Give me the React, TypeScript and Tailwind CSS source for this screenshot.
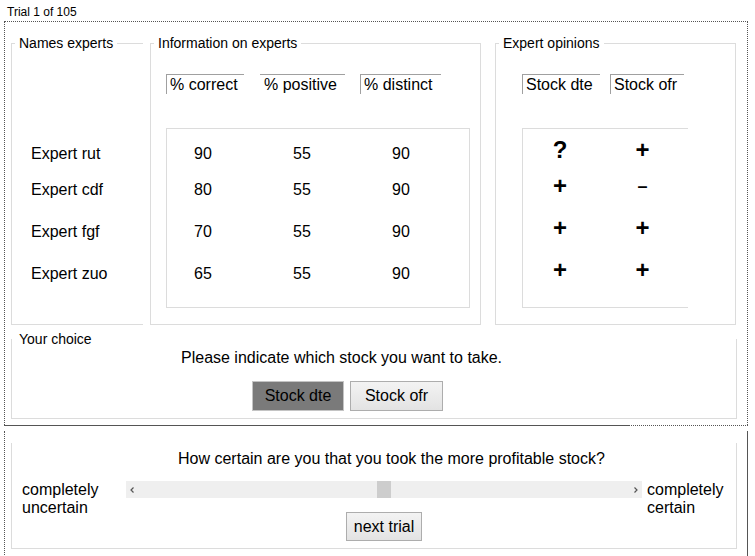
const FONT = "font-['Liberation_Sans',Arial,sans-serif]";

type Expert = {
  name: string;
  correct: number;
  positive: number;
  distinct: number;
  dte: string;
  ofr: string;
  rowH: string;
};

const EXPERTS: Expert[] = [
  { name: "Expert rut", correct: 90, positive: 55, distinct: 90, dte: "?", ofr: "+", rowH: "h-[36px]" },
  { name: "Expert cdf", correct: 80, positive: 55, distinct: 90, dte: "+", ofr: "–", rowH: "h-[42px]" },
  { name: "Expert fgf", correct: 70, positive: 55, distinct: 90, dte: "+", ofr: "+", rowH: "h-[42px]" },
  { name: "Expert zuo", correct: 65, positive: 55, distinct: 90, dte: "+", ofr: "+", rowH: "h-[18px]" },
];

function Legend({ children }: { children: string }) {
  return (
    <legend className="ml-[3px] px-[4px] text-[14px] leading-[16px]">
      {children}
    </legend>
  );
}

function Symbol({ value }: { value: string }) {
  // the minus is drawn smaller than the plus in the original
  return value === "–" ? <span className="text-[18px]">{value}</span> : <span>{value}</span>;
}

export default function App() {
  return (
    <div className={`w-[755px] h-[556px] overflow-hidden bg-white text-black ${FONT}`}>
      <div className="pl-[7px] pt-[5px] text-[12px] leading-[14px]">Trial 1 of 105</div>

      {/* Trial panel */}
      <div className="mt-[2px] ml-[4px] w-[744px]">
        <div className="border-l border-r border-t border-dotted border-[#555] pl-[6px] pt-[13px] pb-[6px]">
          <div className="flex items-start">
            {/* Names */}
            <fieldset className="w-[132px] h-[290px] border-l border-t border-b border-[#dcdcdc]">
              <Legend>Names experts</Legend>
              <div className="mt-[94px] pl-[19px] text-[16px] leading-[18px]">
                {EXPERTS.map((e) => (
                  <div key={e.name} className={e.rowH}>
                    {e.name}
                  </div>
                ))}
              </div>
            </fieldset>

            {/* Information */}
            <fieldset className="ml-[7px] w-[331px] h-[290px] border border-[#dcdcdc]">
              <Legend>Information on experts</Legend>
              <div className="mt-[23px] ml-[15px] flex text-[16px] leading-[18px]">
                <div className="w-[78px] h-[20px] border-l border-t border-[#a0a0a0] pl-[3px] pt-px">% correct</div>
                <div className="ml-[16px] w-[85px] h-[20px] border-t border-[#a0a0a0] pl-[4px] pt-px">% positive</div>
                <div className="ml-[15px] w-[81px] h-[20px] border-l border-t border-[#a0a0a0] pl-[3px] pt-px">% distinct</div>
              </div>
              <div className="mt-[34px] ml-[15px] w-[304px] h-[180px] border border-[#dcdcdc] pt-[16px] pl-[27px] text-[16px] leading-[18px]">
                {EXPERTS.map((e) => (
                  <div key={e.name} className={`grid grid-cols-[99px_99px_99px] ${e.rowH}`}>
                    <span>{e.correct}</span>
                    <span>{e.positive}</span>
                    <span>{e.distinct}</span>
                  </div>
                ))}
              </div>
            </fieldset>

            {/* Opinions */}
            <fieldset className="ml-[14px] w-[241px] h-[290px] border border-[#dcdcdc]">
              <Legend>Expert opinions</Legend>
              <div className="mt-[23px] ml-[26px] flex text-[16px] leading-[18px]">
                <div className="w-[78px] h-[20px] border-l border-t border-[#a0a0a0] pl-[3px] pt-px">Stock dte</div>
                <div className="ml-[10px] w-[74px] h-[20px] border-l border-t border-[#a0a0a0] pl-[3px] pt-px">Stock ofr</div>
              </div>
              <div className="mt-[34px] ml-[26px] w-[166px] h-[180px] border-l border-t border-b border-[#dcdcdc] pt-[12px] text-[24px] leading-[18px] font-bold">
                {EXPERTS.map((e) => (
                  <div key={e.name} className={`grid grid-cols-[74px_91px] text-center ${e.rowH}`}>
                    <Symbol value={e.dte} />
                    <Symbol value={e.ofr} />
                  </div>
                ))}
              </div>
            </fieldset>
          </div>

          {/* Choice */}
          <fieldset className="mt-[6px] w-[726px] border-l border-r border-b border-[#dcdcdc] pb-[7px]">
            <Legend>Your choice</Legend>
            <p className="mt-[2px] pl-[169px] text-[16px] leading-[18px]">
              Please indicate which stock you want to take.
            </p>
            <div className="mt-[14px] pl-[240px] flex gap-[6px] text-[16px] leading-[18px]">
              <button
                type="button"
                className="w-[92px] h-[30px] border border-[#c4c4c4] bg-[#7a7a7a] text-black"
              >
                Stock dte
              </button>
              <button
                type="button"
                className="w-[93px] h-[30px] border border-[#adadad] bg-linear-to-b from-[#f3f3f3] to-[#e3e3e3] text-black"
              >
                Stock ofr
              </button>
            </div>
          </fieldset>
        </div>
        <div className="flex">
          <div className="w-[624px] h-px bg-[#555]" />
          <div className="flex-1 border-t border-dotted border-[#555]" />
        </div>
      </div>

      {/* Certainty panel */}
      <div className="mt-[5px] ml-[4px] w-[744px] h-[130px] border-r border-[#555]">
        <div className="h-full border-l border-dotted border-[#555] pl-[6px] pt-[12px]">
          <fieldset className="w-[726px] border-l border-r border-b border-[#dcdcdc] pb-[7px] text-[16px] leading-[18px]">
            <p className="mt-[7px] pl-[166px]">
              How certain are you that you took the more profitable stock?
            </p>
            <div className="mt-[13px] flex items-start">
              <div className="w-[114px] pl-[10px]">
                completely
                <br />
                uncertain
              </div>
              <div className="w-[516px] flex flex-col items-center">
                <div className="relative w-full h-[17px] bg-[#efefef]">
                  <svg className="absolute left-[4px] top-[6px]" width="4" height="6" viewBox="0 0 4 6">
                    <path d="M3.5 0.5 L1 3 L3.5 5.5" fill="none" stroke="#555" strokeWidth="1.2" />
                  </svg>
                  <div className="absolute left-[251px] top-0 w-[14px] h-full bg-[#cdcdcd]" />
                  <svg className="absolute right-[4px] top-[6px]" width="4" height="6" viewBox="0 0 4 6">
                    <path d="M0.5 0.5 L3 3 L0.5 5.5" fill="none" stroke="#555" strokeWidth="1.2" />
                  </svg>
                </div>
                <button
                  type="button"
                  className="mt-[14px] w-[76px] h-[29px] border border-[#adadad] bg-linear-to-b from-[#f3f3f3] to-[#e3e3e3] text-black"
                >
                  next trial
                </button>
              </div>
              <div className="pl-[5px]">
                completely
                <br />
                certain
              </div>
            </div>
          </fieldset>
        </div>
      </div>
    </div>
  );
}
